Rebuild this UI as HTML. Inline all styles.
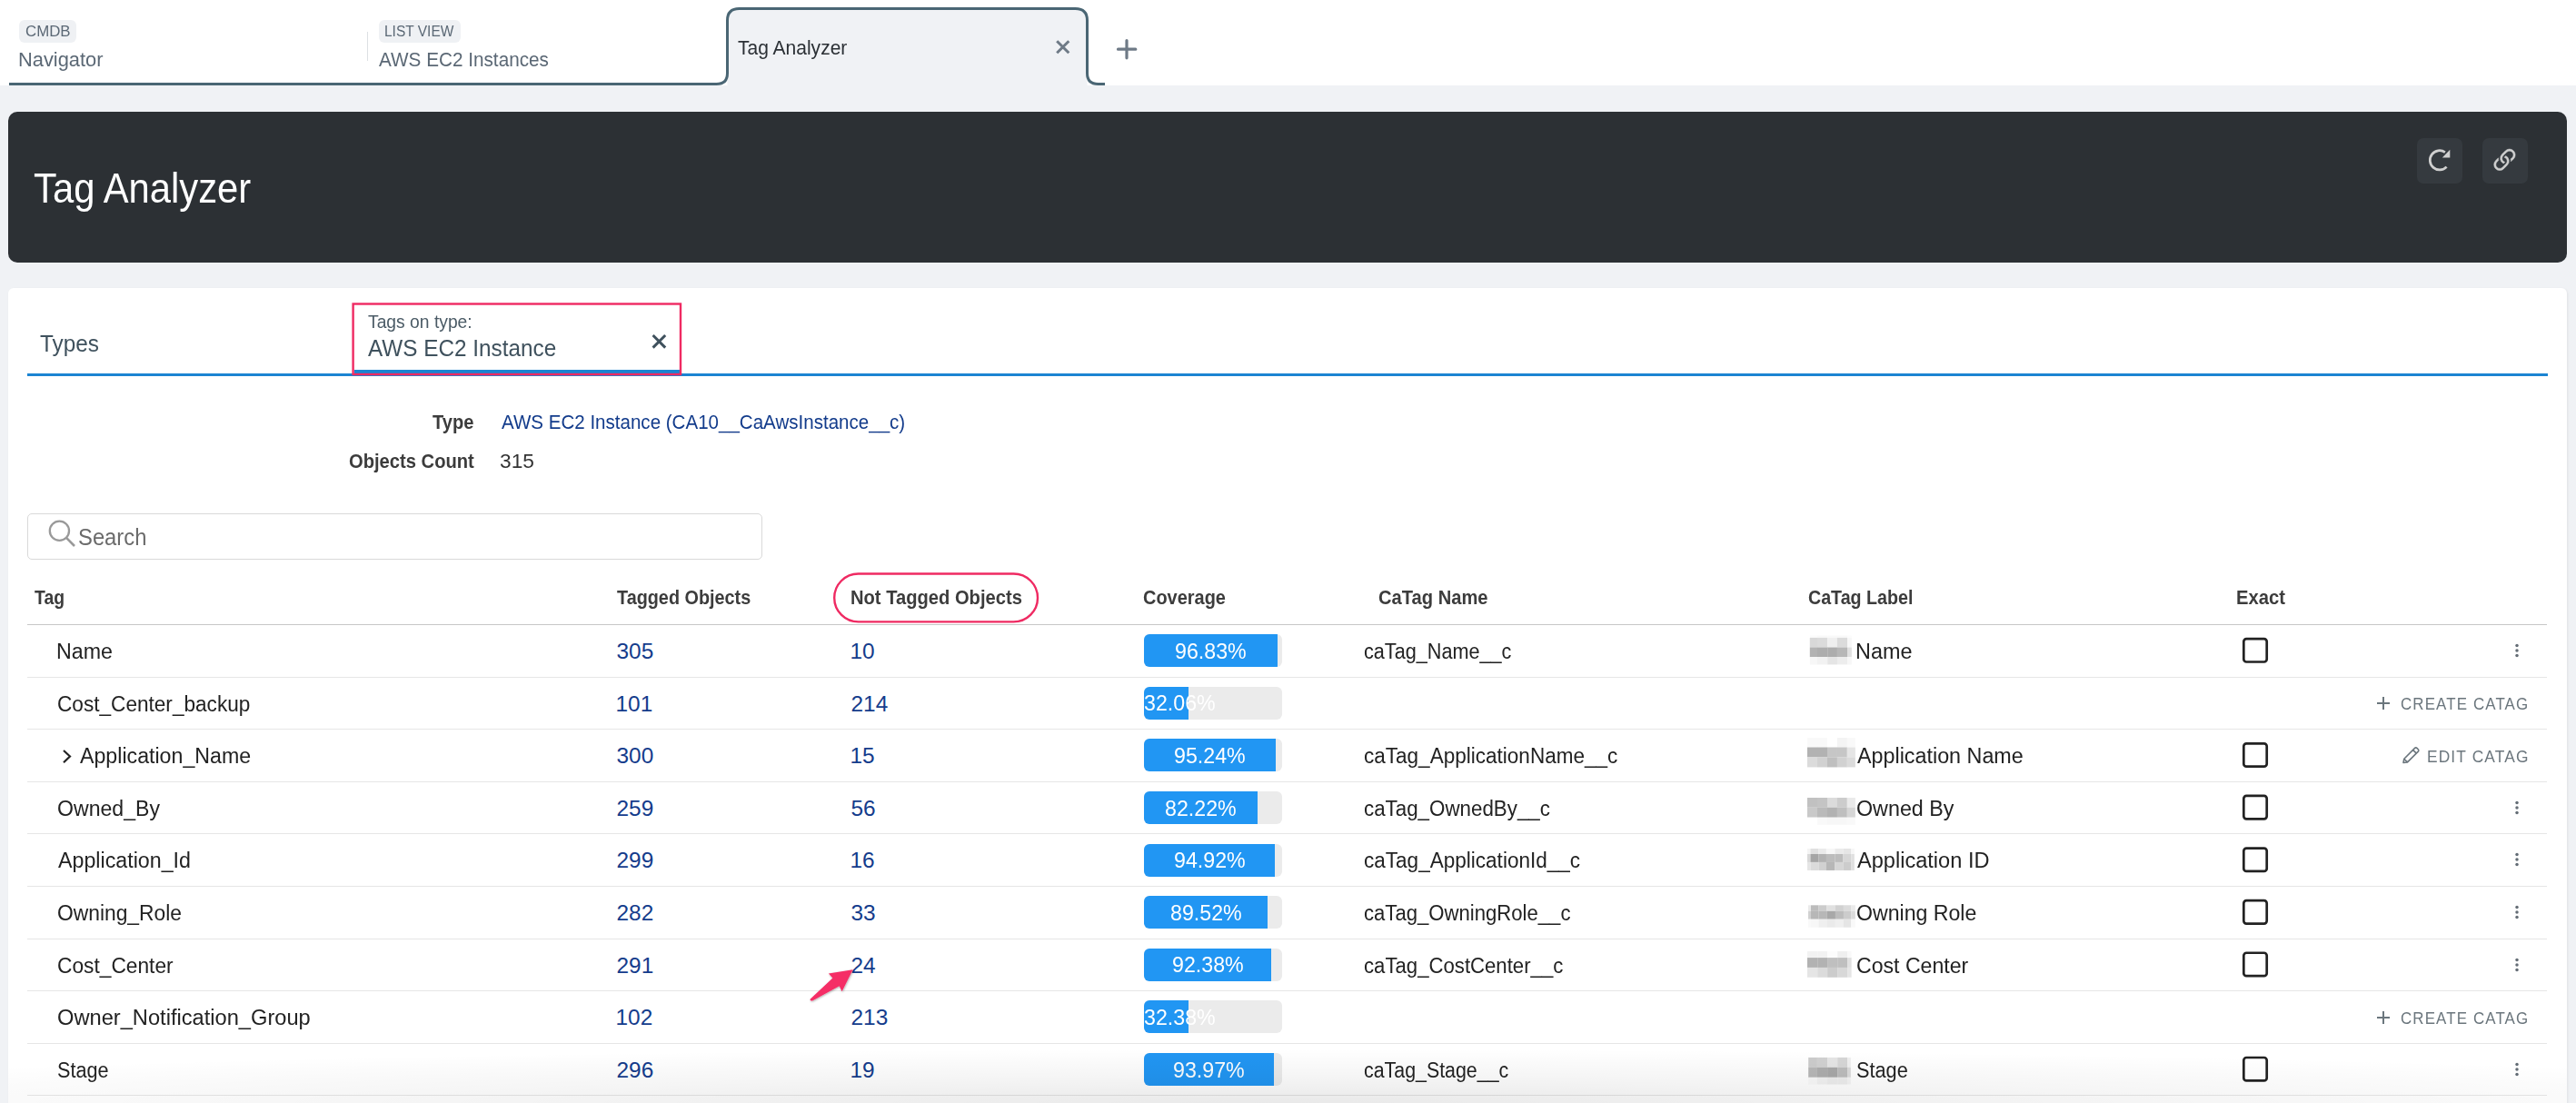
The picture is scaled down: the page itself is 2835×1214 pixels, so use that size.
<!DOCTYPE html>
<html><head><meta charset="utf-8"><title>Tag Analyzer</title>
<style>
html,body{margin:0;padding:0;}
body{width:2835px;height:1214px;overflow:hidden;background:#f0f2f5;position:relative;font-family:'Liberation Sans', sans-serif;}
.t{position:absolute;white-space:nowrap;transform-origin:0 0;font-family:'Liberation Sans', sans-serif;}
.badge{position:absolute;background:#eff1f4;border-radius:6px;}
</style></head><body>
<div style="position:absolute;left:0;top:0;width:2835px;height:94px;background:#ffffff"></div>
<div class="badge" style="left:21px;top:22px;width:63px;height:25px"></div>
<div class="badge" style="left:417px;top:22px;width:90px;height:25px"></div>
<div style="position:absolute;left:404px;top:35px;width:1px;height:32px;background:#dde0e3"></div>
<svg style="position:absolute;left:0;top:0" width="1300" height="100" viewBox="0 0 1300 100">
<path d="M800.5 92.5 L800.5 22.5 Q800.5 9.5 813.5 9.5 L1183.5 9.5 Q1196.5 9.5 1196.5 22.5 L1196.5 94 L800.5 94 Z" fill="#f0f2f5"/>
<path d="M10 92.5 L788.5 92.5 Q800.5 92.5 800.5 80.5 L800.5 22.5 Q800.5 9.5 813.5 9.5 L1183.5 9.5 Q1196.5 9.5 1196.5 22.5 L1196.5 80.5 Q1196.5 92.5 1208.5 92.5 L1216 92.5" fill="none" stroke="#4a6674" stroke-width="3"/>
<path d="M1163.2 45.2 L1176.3 58.2 M1176.3 45.2 L1163.2 58.2" stroke="#6e7a86" stroke-width="3" stroke-linecap="butt"/>
<path d="M1240 44.5 L1240 63.8 M1230.5 54.2 L1249.8 54.2" stroke="#6e7a86" stroke-width="3.2" stroke-linecap="round"/>
</svg>
<div style="position:absolute;left:9px;top:123px;width:2816px;height:166px;background:#2c3034;border-radius:10px"></div>
<div style="position:absolute;left:2660px;top:152px;width:50px;height:50px;background:#353a3f;border-radius:7px"></div>
<div style="position:absolute;left:2732px;top:152px;width:50px;height:50px;background:#353a3f;border-radius:7px"></div>
<svg style="position:absolute;left:2660px;top:152px" width="50" height="50" viewBox="0 0 50 50">
<path d="M30.9 15.6 A10.6 10.6 0 1 0 32.6 31.6" fill="none" stroke="#d0d0d0" stroke-width="2.7"/>
<path d="M36.3 12.8 L36.3 21.4 L27.8 21.4 Z" fill="#d0d0d0"/>
</svg>
<svg style="position:absolute;left:2732px;top:152px" width="50" height="50" viewBox="0 0 50 50">
<g transform="translate(7.517 7.917) scale(2.116)" fill="#d0d0d0" stroke="#d0d0d0" stroke-width="0.25" stroke-linejoin="round">
<path d="M4.715 6.542 3.343 7.914a3 3 0 1 0 4.243 4.243l1.828-1.829A3 3 0 0 0 8.586 5.5L8 6.086a1 1 0 0 0-.154.199 2 2 0 0 1 .861 3.337L6.88 11.45a2 2 0 1 1-2.830-2.830l.793-.792a4 4 0 0 1-.128-1.287z"/>
<path d="M6.586 4.672A3 3 0 0 0 7.414 9.5l.775-.776a2 2 0 0 1-.896-3.346L9.12 3.55a2 2 0 1 1 2.830 2.830l-.793.792c.112.42.155.855.128 1.287l1.372-1.372a3 3 0 1 0-4.243-4.243z"/>
</g></svg>
<div style="position:absolute;left:9px;top:317px;width:2816px;height:960px;background:#ffffff;border-radius:6px;box-shadow:1px 1px 3px rgba(0,0,0,0.07)"></div>
<div style="position:absolute;left:30px;top:411px;width:2774px;height:3px;background:#1b84d2"></div>
<div style="position:absolute;left:390px;top:407px;width:358px;height:4.5px;background:#1b84d2"></div>
<svg style="position:absolute;left:380px;top:325px" width="380" height="100" viewBox="380 325 380 100"><rect x="388.6" y="334.5" width="360.4" height="77.5" fill="none" stroke="#ef2a62" stroke-width="2.4"/></svg>
<svg style="position:absolute;left:700px;top:355px" width="50" height="40" viewBox="0 0 50 40">
<path d="M18.6 14 L32.2 27.6 M32.2 14 L18.6 27.6" stroke="#3f515d" stroke-width="3"/>
</svg>
<div style="position:absolute;left:30px;top:565px;width:807px;height:49px;border:1px solid #d9d9d9;border-radius:5px;background:#fff"></div>
<svg style="position:absolute;left:40px;top:560px" width="60" height="50" viewBox="0 0 60 50">
<circle cx="25.4" cy="24.3" r="10.6" fill="none" stroke="#999" stroke-width="2.3"/>
<path d="M33.0 31.9 L42 41" stroke="#999" stroke-width="2.6"/>
</svg>
<div style="position:absolute;left:30px;top:687px;width:2773px;height:1px;background:#c6c6c6"></div>
<svg style="position:absolute;left:910px;top:620px" width="240" height="75" viewBox="910 620 240 75"><rect x="918.2" y="631.5" width="223.8" height="52.9" rx="26.45" fill="none" stroke="#ef2a62" stroke-width="2.4"/></svg>
<div style="position:absolute;left:30px;top:745px;width:2773px;height:1px;background:#e6e6e6"></div>
<div style="position:absolute;left:1258.8px;top:698.10px;width:152.2px;height:36px;background:#ebebeb;border-radius:6px;overflow:hidden"><div style="position:absolute;left:0;top:0;width:147.38px;height:36px;background:#2196f3"></div></div>
<svg style="position:absolute;left:1980px;top:696px" width="70" height="45" viewBox="1980 696 70 45"><rect x="1991.8" y="699.5" width="8.25" height="2.45" fill="rgb(252,252,252)"/><rect x="2000.0" y="699.5" width="11.25" height="2.45" fill="rgb(249,249,249)"/><rect x="2011.2" y="699.5" width="10.75" height="2.45" fill="rgb(249,249,249)"/><rect x="2021.9" y="699.5" width="11.15" height="2.45" fill="rgb(249,249,249)"/><rect x="2033.0" y="699.5" width="4.85" height="2.45" fill="rgb(252,252,252)"/><rect x="1991.8" y="701.9" width="8.25" height="10.65" fill="rgb(216,216,216)"/><rect x="2000.0" y="701.9" width="11.25" height="10.65" fill="rgb(219,219,219)"/><rect x="2011.2" y="701.9" width="10.75" height="10.65" fill="rgb(239,239,239)"/><rect x="2021.9" y="701.9" width="11.15" height="10.65" fill="rgb(219,219,219)"/><rect x="2033.0" y="701.9" width="4.85" height="10.65" fill="rgb(247,247,247)"/><rect x="1991.8" y="712.5" width="8.25" height="10.65" fill="rgb(178,178,178)"/><rect x="2000.0" y="712.5" width="11.25" height="10.65" fill="rgb(173,173,173)"/><rect x="2011.2" y="712.5" width="10.75" height="10.65" fill="rgb(173,173,173)"/><rect x="2021.9" y="712.5" width="11.15" height="10.65" fill="rgb(183,183,183)"/><rect x="2033.0" y="712.5" width="4.85" height="10.65" fill="rgb(224,224,224)"/><rect x="1991.8" y="723.1" width="8.25" height="8.35" fill="rgb(247,247,247)"/><rect x="2000.0" y="723.1" width="11.25" height="8.35" fill="rgb(242,242,242)"/><rect x="2011.2" y="723.1" width="10.75" height="8.35" fill="rgb(229,229,229)"/><rect x="2021.9" y="723.1" width="11.15" height="8.35" fill="rgb(237,237,237)"/><rect x="2033.0" y="723.1" width="4.85" height="8.35" fill="rgb(247,247,247)"/></svg>
<svg style="position:absolute;left:2460px;top:693px" width="45" height="45" viewBox="2460 693 45 45"><rect x="2469.3" y="703.10" width="25.4" height="25.4" rx="3" fill="none" stroke="#222" stroke-width="2.7"/></svg>
<svg style="position:absolute;left:2760px;top:700.00px" width="20" height="32" viewBox="0 0 20 32"><circle cx="10" cy="10.6" r="1.75" fill="#646d75"/><circle cx="10" cy="16" r="1.75" fill="#646d75"/><circle cx="10" cy="21.5" r="1.75" fill="#646d75"/></svg>
<div style="position:absolute;left:30px;top:802px;width:2773px;height:1px;background:#e6e6e6"></div>
<div style="position:absolute;left:1258.8px;top:755.71px;width:152.2px;height:36px;background:#ebebeb;border-radius:6px;overflow:hidden"><div style="position:absolute;left:0;top:0;width:48.80px;height:36px;background:#2196f3"></div></div>
<svg style="position:absolute;left:2610px;top:764.20px" width="26" height="22" viewBox="0 0 26 22"><path d="M13 3 L13 17 M6 10 L20 10" stroke="#6b767d" stroke-width="2"/></svg>
<div style="position:absolute;left:30px;top:860px;width:2773px;height:1px;background:#e6e6e6"></div>
<div style="position:absolute;left:1258.8px;top:813.32px;width:152.2px;height:36px;background:#ebebeb;border-radius:6px;overflow:hidden"><div style="position:absolute;left:0;top:0;width:144.96px;height:36px;background:#2196f3"></div></div>
<svg style="position:absolute;left:1980px;top:808px" width="70" height="45" viewBox="1980 808 70 45"><rect x="1989.0" y="812.0" width="11.05" height="10.55" fill="rgb(249,249,249)"/><rect x="2000.0" y="812.0" width="11.05" height="10.55" fill="rgb(249,249,249)"/><rect x="2011.0" y="812.0" width="10.95" height="10.55" fill="rgb(255,255,255)"/><rect x="2021.9" y="812.0" width="10.95" height="10.55" fill="rgb(244,244,244)"/><rect x="2032.8" y="812.0" width="9.05" height="10.55" fill="rgb(249,249,249)"/><rect x="1989.0" y="822.5" width="11.05" height="10.95" fill="rgb(178,178,178)"/><rect x="2000.0" y="822.5" width="11.05" height="10.95" fill="rgb(178,178,178)"/><rect x="2011.0" y="822.5" width="10.95" height="10.95" fill="rgb(198,198,198)"/><rect x="2021.9" y="822.5" width="10.95" height="10.95" fill="rgb(198,198,198)"/><rect x="2032.8" y="822.5" width="9.05" height="10.95" fill="rgb(229,229,229)"/><rect x="1989.0" y="833.4" width="11.05" height="11.05" fill="rgb(219,219,219)"/><rect x="2000.0" y="833.4" width="11.05" height="11.05" fill="rgb(209,209,209)"/><rect x="2011.0" y="833.4" width="10.95" height="11.05" fill="rgb(191,191,191)"/><rect x="2021.9" y="833.4" width="10.95" height="11.05" fill="rgb(209,209,209)"/><rect x="2032.8" y="833.4" width="9.05" height="11.05" fill="rgb(219,219,219)"/></svg>
<svg style="position:absolute;left:2460px;top:809px" width="45" height="45" viewBox="2460 809 45 45"><rect x="2469.3" y="818.32" width="25.4" height="25.4" rx="3" fill="none" stroke="#222" stroke-width="2.7"/></svg>
<svg style="position:absolute;left:2640px;top:820.00px" width="26" height="24" viewBox="0 0 26 24">
<path d="M5 19.5 L5.8 15.2 L17.6 3.4 A1.6 1.6 0 0 1 19.9 3.4 L21.3 4.8 A1.6 1.6 0 0 1 21.3 7.1 L9.5 18.9 Z M15.6 5.4 L19.3 9.1 M5.8 15.2 L9.5 18.9" fill="none" stroke="#6b767d" stroke-width="1.6" stroke-linejoin="round"/>
</svg>
<svg style="position:absolute;left:66px;top:823.20px" width="16" height="20" viewBox="0 0 16 20"><path d="M4 3 L11 9.5 L4 16.2" fill="none" stroke="#222" stroke-width="2.2"/></svg>
<div style="position:absolute;left:30px;top:917px;width:2773px;height:1px;background:#e6e6e6"></div>
<div style="position:absolute;left:1258.8px;top:870.93px;width:152.2px;height:36px;background:#ebebeb;border-radius:6px;overflow:hidden"><div style="position:absolute;left:0;top:0;width:125.14px;height:36px;background:#2196f3"></div></div>
<svg style="position:absolute;left:1980px;top:874px" width="70" height="45" viewBox="1980 874 70 45"><rect x="1989.0" y="878.0" width="11.05" height="10.75" fill="rgb(193,193,193)"/><rect x="2000.0" y="878.0" width="11.05" height="10.75" fill="rgb(196,196,196)"/><rect x="2011.0" y="878.0" width="10.95" height="10.75" fill="rgb(219,219,219)"/><rect x="2021.9" y="878.0" width="10.95" height="10.75" fill="rgb(204,204,204)"/><rect x="2032.8" y="878.0" width="9.05" height="10.75" fill="rgb(234,234,234)"/><rect x="1989.0" y="888.7" width="11.05" height="11.05" fill="rgb(201,201,201)"/><rect x="2000.0" y="888.7" width="11.05" height="11.05" fill="rgb(186,186,186)"/><rect x="2011.0" y="888.7" width="10.95" height="11.05" fill="rgb(178,178,178)"/><rect x="2021.9" y="888.7" width="10.95" height="11.05" fill="rgb(191,191,191)"/><rect x="2032.8" y="888.7" width="9.05" height="11.05" fill="rgb(214,214,214)"/><rect x="1989.0" y="899.7" width="11.05" height="8.05" fill="rgb(255,255,255)"/><rect x="2000.0" y="899.7" width="11.05" height="8.05" fill="rgb(249,249,249)"/><rect x="2011.0" y="899.7" width="10.95" height="8.05" fill="rgb(247,247,247)"/><rect x="2021.9" y="899.7" width="10.95" height="8.05" fill="rgb(247,247,247)"/><rect x="2032.8" y="899.7" width="9.05" height="8.05" fill="rgb(249,249,249)"/></svg>
<svg style="position:absolute;left:2460px;top:866px" width="45" height="45" viewBox="2460 866 45 45"><rect x="2469.3" y="875.93" width="25.4" height="25.4" rx="3" fill="none" stroke="#222" stroke-width="2.7"/></svg>
<svg style="position:absolute;left:2760px;top:872.83px" width="20" height="32" viewBox="0 0 20 32"><circle cx="10" cy="10.6" r="1.75" fill="#646d75"/><circle cx="10" cy="16" r="1.75" fill="#646d75"/><circle cx="10" cy="21.5" r="1.75" fill="#646d75"/></svg>
<div style="position:absolute;left:30px;top:975px;width:2773px;height:1px;background:#e6e6e6"></div>
<div style="position:absolute;left:1258.8px;top:928.54px;width:152.2px;height:36px;background:#ebebeb;border-radius:6px;overflow:hidden"><div style="position:absolute;left:0;top:0;width:144.47px;height:36px;background:#2196f3"></div></div>
<svg style="position:absolute;left:1980px;top:930px" width="70" height="45" viewBox="1980 930 70 45"><rect x="1989.0" y="934.0" width="3.55" height="6.05" fill="rgb(244,244,244)"/><rect x="1992.5" y="934.0" width="8.95" height="6.05" fill="rgb(224,224,224)"/><rect x="2001.4" y="934.0" width="8.55" height="6.05" fill="rgb(234,234,234)"/><rect x="2009.9" y="934.0" width="9.55" height="6.05" fill="rgb(247,247,247)"/><rect x="2019.4" y="934.0" width="9.05" height="6.05" fill="rgb(234,234,234)"/><rect x="2028.4" y="934.0" width="8.95" height="6.05" fill="rgb(229,229,229)"/><rect x="2037.3" y="934.0" width="3.55" height="6.05" fill="rgb(247,247,247)"/><rect x="1989.0" y="940.0" width="3.55" height="8.95" fill="rgb(216,216,216)"/><rect x="1992.5" y="940.0" width="8.95" height="8.95" fill="rgb(165,165,165)"/><rect x="2001.4" y="940.0" width="8.55" height="8.95" fill="rgb(178,178,178)"/><rect x="2009.9" y="940.0" width="9.55" height="8.95" fill="rgb(188,188,188)"/><rect x="2019.4" y="940.0" width="9.05" height="8.95" fill="rgb(188,188,188)"/><rect x="2028.4" y="940.0" width="8.95" height="8.95" fill="rgb(214,214,214)"/><rect x="2037.3" y="940.0" width="3.55" height="8.95" fill="rgb(224,224,224)"/><rect x="1989.0" y="948.9" width="3.55" height="9.05" fill="rgb(229,229,229)"/><rect x="1992.5" y="948.9" width="8.95" height="9.05" fill="rgb(219,219,219)"/><rect x="2001.4" y="948.9" width="8.55" height="9.05" fill="rgb(209,209,209)"/><rect x="2009.9" y="948.9" width="9.55" height="9.05" fill="rgb(183,183,183)"/><rect x="2019.4" y="948.9" width="9.05" height="9.05" fill="rgb(214,214,214)"/><rect x="2028.4" y="948.9" width="8.95" height="9.05" fill="rgb(204,204,204)"/><rect x="2037.3" y="948.9" width="3.55" height="9.05" fill="rgb(224,224,224)"/></svg>
<svg style="position:absolute;left:2460px;top:924px" width="45" height="45" viewBox="2460 924 45 45"><rect x="2469.3" y="933.54" width="25.4" height="25.4" rx="3" fill="none" stroke="#222" stroke-width="2.7"/></svg>
<svg style="position:absolute;left:2760px;top:930.44px" width="20" height="32" viewBox="0 0 20 32"><circle cx="10" cy="10.6" r="1.75" fill="#646d75"/><circle cx="10" cy="16" r="1.75" fill="#646d75"/><circle cx="10" cy="21.5" r="1.75" fill="#646d75"/></svg>
<div style="position:absolute;left:30px;top:1033px;width:2773px;height:1px;background:#e6e6e6"></div>
<div style="position:absolute;left:1258.8px;top:986.15px;width:152.2px;height:36px;background:#ebebeb;border-radius:6px;overflow:hidden"><div style="position:absolute;left:0;top:0;width:136.25px;height:36px;background:#2196f3"></div></div>
<svg style="position:absolute;left:1980px;top:992px" width="70" height="45" viewBox="1980 992 70 45"><rect x="1990.0" y="996.3" width="3.05" height="6.55" fill="rgb(234,234,234)"/><rect x="1993.0" y="996.3" width="8.45" height="6.55" fill="rgb(188,188,188)"/><rect x="2001.4" y="996.3" width="9.05" height="6.55" fill="rgb(204,204,204)"/><rect x="2010.4" y="996.3" width="9.55" height="6.55" fill="rgb(224,224,224)"/><rect x="2019.9" y="996.3" width="9.05" height="6.55" fill="rgb(209,209,209)"/><rect x="2028.9" y="996.3" width="8.45" height="6.55" fill="rgb(219,219,219)"/><rect x="2037.3" y="996.3" width="4.55" height="6.55" fill="rgb(234,234,234)"/><rect x="1990.0" y="1002.8" width="3.05" height="8.95" fill="rgb(209,209,209)"/><rect x="1993.0" y="1002.8" width="8.45" height="8.95" fill="rgb(183,183,183)"/><rect x="2001.4" y="1002.8" width="9.05" height="8.95" fill="rgb(183,183,183)"/><rect x="2010.4" y="1002.8" width="9.55" height="8.95" fill="rgb(168,168,168)"/><rect x="2019.9" y="1002.8" width="9.05" height="8.95" fill="rgb(188,188,188)"/><rect x="2028.9" y="1002.8" width="8.45" height="8.95" fill="rgb(204,204,204)"/><rect x="2037.3" y="1002.8" width="4.55" height="8.95" fill="rgb(219,219,219)"/><rect x="1990.0" y="1011.7" width="3.05" height="9.05" fill="rgb(249,249,249)"/><rect x="1993.0" y="1011.7" width="8.45" height="9.05" fill="rgb(247,247,247)"/><rect x="2001.4" y="1011.7" width="9.05" height="9.05" fill="rgb(239,239,239)"/><rect x="2010.4" y="1011.7" width="9.55" height="9.05" fill="rgb(234,234,234)"/><rect x="2019.9" y="1011.7" width="9.05" height="9.05" fill="rgb(239,239,239)"/><rect x="2028.9" y="1011.7" width="8.45" height="9.05" fill="rgb(229,229,229)"/><rect x="2037.3" y="1011.7" width="4.55" height="9.05" fill="rgb(249,249,249)"/></svg>
<svg style="position:absolute;left:2460px;top:981px" width="45" height="45" viewBox="2460 981 45 45"><rect x="2469.3" y="991.15" width="25.4" height="25.4" rx="3" fill="none" stroke="#222" stroke-width="2.7"/></svg>
<svg style="position:absolute;left:2760px;top:988.05px" width="20" height="32" viewBox="0 0 20 32"><circle cx="10" cy="10.6" r="1.75" fill="#646d75"/><circle cx="10" cy="16" r="1.75" fill="#646d75"/><circle cx="10" cy="21.5" r="1.75" fill="#646d75"/></svg>
<div style="position:absolute;left:30px;top:1090px;width:2773px;height:1px;background:#e6e6e6"></div>
<div style="position:absolute;left:1258.8px;top:1043.76px;width:152.2px;height:36px;background:#ebebeb;border-radius:6px;overflow:hidden"><div style="position:absolute;left:0;top:0;width:140.60px;height:36px;background:#2196f3"></div></div>
<svg style="position:absolute;left:1980px;top:1043px" width="70" height="45" viewBox="1980 1043 70 45"><rect x="1989.0" y="1047.0" width="11.25" height="7.15" fill="rgb(242,242,242)"/><rect x="2000.2" y="1047.0" width="10.95" height="7.15" fill="rgb(242,242,242)"/><rect x="2011.1" y="1047.0" width="11.15" height="7.15" fill="rgb(252,252,252)"/><rect x="2022.2" y="1047.0" width="10.95" height="7.15" fill="rgb(239,239,239)"/><rect x="2033.1" y="1047.0" width="4.55" height="7.15" fill="rgb(249,249,249)"/><rect x="1989.0" y="1054.1" width="11.25" height="10.85" fill="rgb(178,178,178)"/><rect x="2000.2" y="1054.1" width="10.95" height="10.85" fill="rgb(178,178,178)"/><rect x="2011.1" y="1054.1" width="11.15" height="10.85" fill="rgb(191,191,191)"/><rect x="2022.2" y="1054.1" width="10.95" height="10.85" fill="rgb(191,191,191)"/><rect x="2033.1" y="1054.1" width="4.55" height="10.85" fill="rgb(224,224,224)"/><rect x="1989.0" y="1064.9" width="11.25" height="10.85" fill="rgb(229,229,229)"/><rect x="2000.2" y="1064.9" width="10.95" height="10.85" fill="rgb(219,219,219)"/><rect x="2011.1" y="1064.9" width="11.15" height="10.85" fill="rgb(204,204,204)"/><rect x="2022.2" y="1064.9" width="10.95" height="10.85" fill="rgb(216,216,216)"/><rect x="2033.1" y="1064.9" width="4.55" height="10.85" fill="rgb(229,229,229)"/></svg>
<svg style="position:absolute;left:2460px;top:1039px" width="45" height="45" viewBox="2460 1039 45 45"><rect x="2469.3" y="1048.76" width="25.4" height="25.4" rx="3" fill="none" stroke="#222" stroke-width="2.7"/></svg>
<svg style="position:absolute;left:2760px;top:1045.66px" width="20" height="32" viewBox="0 0 20 32"><circle cx="10" cy="10.6" r="1.75" fill="#646d75"/><circle cx="10" cy="16" r="1.75" fill="#646d75"/><circle cx="10" cy="21.5" r="1.75" fill="#646d75"/></svg>
<div style="position:absolute;left:30px;top:1148px;width:2773px;height:1px;background:#e6e6e6"></div>
<div style="position:absolute;left:1258.8px;top:1101.37px;width:152.2px;height:36px;background:#ebebeb;border-radius:6px;overflow:hidden"><div style="position:absolute;left:0;top:0;width:49.28px;height:36px;background:#2196f3"></div></div>
<svg style="position:absolute;left:2610px;top:1109.86px" width="26" height="22" viewBox="0 0 26 22"><path d="M13 3 L13 17 M6 10 L20 10" stroke="#6b767d" stroke-width="2"/></svg>
<div style="position:absolute;left:30px;top:1205px;width:2773px;height:1px;background:#e6e6e6"></div>
<div style="position:absolute;left:1258.8px;top:1158.98px;width:152.2px;height:36px;background:#ebebeb;border-radius:6px;overflow:hidden"><div style="position:absolute;left:0;top:0;width:143.02px;height:36px;background:#2196f3"></div></div>
<svg style="position:absolute;left:1980px;top:1160px" width="70" height="45" viewBox="1980 1160 70 45"><rect x="1990.2" y="1163.9" width="9.75" height="10.95" fill="rgb(204,204,204)"/><rect x="1999.9" y="1163.9" width="11.25" height="10.95" fill="rgb(209,209,209)"/><rect x="2011.1" y="1163.9" width="11.15" height="10.95" fill="rgb(229,229,229)"/><rect x="2022.2" y="1163.9" width="10.95" height="10.95" fill="rgb(214,214,214)"/><rect x="2033.1" y="1163.9" width="3.75" height="10.95" fill="rgb(239,239,239)"/><rect x="1990.2" y="1174.8" width="9.75" height="11.05" fill="rgb(183,183,183)"/><rect x="1999.9" y="1174.8" width="11.25" height="11.05" fill="rgb(173,173,173)"/><rect x="2011.1" y="1174.8" width="11.15" height="11.05" fill="rgb(168,168,168)"/><rect x="2022.2" y="1174.8" width="10.95" height="11.05" fill="rgb(188,188,188)"/><rect x="2033.1" y="1174.8" width="3.75" height="11.05" fill="rgb(219,219,219)"/><rect x="1990.2" y="1185.8" width="9.75" height="7.75" fill="rgb(249,249,249)"/><rect x="1999.9" y="1185.8" width="11.25" height="7.75" fill="rgb(242,242,242)"/><rect x="2011.1" y="1185.8" width="11.15" height="7.75" fill="rgb(237,237,237)"/><rect x="2022.2" y="1185.8" width="10.95" height="7.75" fill="rgb(237,237,237)"/><rect x="2033.1" y="1185.8" width="3.75" height="7.75" fill="rgb(244,244,244)"/></svg>
<svg style="position:absolute;left:2460px;top:1154px" width="45" height="45" viewBox="2460 1154 45 45"><rect x="2469.3" y="1163.98" width="25.4" height="25.4" rx="3" fill="none" stroke="#222" stroke-width="2.7"/></svg>
<svg style="position:absolute;left:2760px;top:1160.88px" width="20" height="32" viewBox="0 0 20 32"><circle cx="10" cy="10.6" r="1.75" fill="#646d75"/><circle cx="10" cy="16" r="1.75" fill="#646d75"/><circle cx="10" cy="21.5" r="1.75" fill="#646d75"/></svg>
<div class="t" style="left:27.59px;top:26.90px;font-size:16.71px;line-height:16.71px;color:#5b6875;transform:scaleX(1.0085);">CMDB</div>
<div class="t" style="left:20.02px;top:55.00px;font-size:22.1px;line-height:22.1px;color:#5b6875;transform:scaleX(0.9891);">Navigator</div>
<div class="t" style="left:423.47px;top:26.90px;font-size:16.71px;line-height:16.71px;color:#5b6875;transform:scaleX(0.9284);">LIST VIEW</div>
<div class="t" style="left:417.00px;top:54.90px;font-size:22.1px;line-height:22.1px;color:#5b6875;transform:scaleX(0.9377);">AWS EC2 Instances</div>
<div class="t" style="left:812.05px;top:41.80px;font-size:22.1px;line-height:22.1px;color:#2b3035;transform:scaleX(0.9512);">Tag Analyzer</div>
<div class="t" style="left:37.10px;top:183.90px;font-size:46.57px;line-height:46.57px;color:#ffffff;transform:scaleX(0.8974);">Tag Analyzer</div>
<div class="t" style="left:43.88px;top:364.50px;font-size:26.36px;line-height:26.36px;color:#3f515d;transform:scaleX(0.9232);">Types</div>
<div class="t" style="left:405.00px;top:344.60px;font-size:19.71px;line-height:19.71px;color:#4b5b66;transform:scaleX(0.9793);">Tags on type:</div>
<div class="t" style="left:405.00px;top:370.00px;font-size:26.36px;line-height:26.36px;color:#3f515d;transform:scaleX(0.9223);">AWS EC2 Instance</div>
<div class="t" style="left:476.40px;top:454.80px;font-size:21.36px;line-height:21.36px;color:#3c3c3c;font-weight:700;transform:scaleX(0.9417);">Type</div>
<div class="t" style="left:383.76px;top:497.60px;font-size:21.36px;line-height:21.36px;color:#3c3c3c;font-weight:700;transform:scaleX(0.9441);">Objects Count</div>
<div class="t" style="left:551.50px;top:454.80px;font-size:21.36px;line-height:21.36px;color:#123b8b;transform:scaleX(0.9618);">AWS EC2 Instance (CA10__CaAwsInstance__c)</div>
<div class="t" style="left:550.44px;top:497.60px;font-size:21.36px;line-height:21.36px;color:#333333;transform:scaleX(1.0647);">315</div>
<div class="t" style="left:86.46px;top:578.90px;font-size:25.86px;line-height:25.86px;color:#6b6b6b;transform:scaleX(0.9205);">Search</div>
<div class="t" style="left:38.30px;top:647.00px;font-size:22.57px;line-height:22.57px;color:#3c3c3c;font-weight:700;transform:scaleX(0.8595);">Tag</div>
<div class="t" style="left:678.90px;top:647.00px;font-size:22.57px;line-height:22.57px;color:#3c3c3c;font-weight:700;transform:scaleX(0.8784);">Tagged Objects</div>
<div class="t" style="left:935.51px;top:647.00px;font-size:22.57px;line-height:22.57px;color:#3c3c3c;font-weight:700;transform:scaleX(0.8933);">Not Tagged Objects</div>
<div class="t" style="left:1258.42px;top:647.00px;font-size:22.57px;line-height:22.57px;color:#3c3c3c;font-weight:700;transform:scaleX(0.8842);">Coverage</div>
<div class="t" style="left:1516.61px;top:647.00px;font-size:22.57px;line-height:22.57px;color:#3c3c3c;font-weight:700;transform:scaleX(0.8925);">CaTag Name</div>
<div class="t" style="left:1989.73px;top:647.00px;font-size:22.57px;line-height:22.57px;color:#3c3c3c;font-weight:700;transform:scaleX(0.8708);">CaTag Label</div>
<div class="t" style="left:2460.81px;top:647.00px;font-size:22.57px;line-height:22.57px;color:#3c3c3c;font-weight:700;transform:scaleX(0.8948);">Exact</div>
<div class="t" style="left:61.90px;top:704.90px;font-size:24.43px;line-height:24.43px;color:#222222;transform:scaleX(0.9516);">Name</div>
<div class="t" style="left:678.50px;top:704.90px;font-size:24.43px;line-height:24.43px;color:#143c8c;">305</div>
<div class="t" style="left:935.50px;top:704.90px;font-size:24.43px;line-height:24.43px;color:#143c8c;">10</div>
<div class="t" style="left:1501.11px;top:704.90px;font-size:24.43px;line-height:24.43px;color:#222222;transform:scaleX(0.8863);">caTag_Name__c</div>
<div class="t" style="left:2042.18px;top:704.90px;font-size:24.43px;line-height:24.43px;color:#222222;transform:scaleX(0.9581);">Name</div>
<div class="t" style="left:62.87px;top:762.51px;font-size:24.43px;line-height:24.43px;color:#222222;transform:scaleX(0.9256);">Cost_Center_backup</div>
<div class="t" style="left:677.50px;top:762.51px;font-size:24.43px;line-height:24.43px;color:#143c8c;">101</div>
<div class="t" style="left:936.50px;top:762.51px;font-size:24.43px;line-height:24.43px;color:#143c8c;">214</div>
<div class="t" style="left:2641.97px;top:765.90px;font-size:18.28px;line-height:18.28px;color:#6b767d;letter-spacing:1.2px;transform:scaleX(0.9268);">CREATE CATAG</div>
<div class="t" style="left:88.20px;top:820.12px;font-size:24.43px;line-height:24.43px;color:#222222;transform:scaleX(0.9492);">Application_Name</div>
<div class="t" style="left:678.50px;top:820.12px;font-size:24.43px;line-height:24.43px;color:#143c8c;">300</div>
<div class="t" style="left:935.50px;top:820.12px;font-size:24.43px;line-height:24.43px;color:#143c8c;">15</div>
<div class="t" style="left:1501.08px;top:820.12px;font-size:24.43px;line-height:24.43px;color:#222222;transform:scaleX(0.9226);">caTag_ApplicationName__c</div>
<div class="t" style="left:2044.10px;top:820.12px;font-size:24.43px;line-height:24.43px;color:#222222;transform:scaleX(0.9547);">Application Name</div>
<div class="t" style="left:2670.90px;top:824.00px;font-size:18.28px;line-height:18.28px;color:#6b767d;letter-spacing:1.2px;transform:scaleX(0.9491);">EDIT CATAG</div>
<div class="t" style="left:62.85px;top:877.73px;font-size:24.43px;line-height:24.43px;color:#222222;transform:scaleX(0.9458);">Owned_By</div>
<div class="t" style="left:678.50px;top:877.73px;font-size:24.43px;line-height:24.43px;color:#143c8c;">259</div>
<div class="t" style="left:936.50px;top:877.73px;font-size:24.43px;line-height:24.43px;color:#143c8c;">56</div>
<div class="t" style="left:1501.09px;top:877.73px;font-size:24.43px;line-height:24.43px;color:#222222;transform:scaleX(0.9149);">caTag_OwnedBy__c</div>
<div class="t" style="left:2043.15px;top:877.73px;font-size:24.43px;line-height:24.43px;color:#222222;transform:scaleX(0.9536);">Owned By</div>
<div class="t" style="left:63.80px;top:935.34px;font-size:24.43px;line-height:24.43px;color:#222222;transform:scaleX(0.9513);">Application_Id</div>
<div class="t" style="left:678.50px;top:935.34px;font-size:24.43px;line-height:24.43px;color:#143c8c;">299</div>
<div class="t" style="left:935.50px;top:935.34px;font-size:24.43px;line-height:24.43px;color:#143c8c;">16</div>
<div class="t" style="left:1501.08px;top:935.34px;font-size:24.43px;line-height:24.43px;color:#222222;transform:scaleX(0.9230);">caTag_ApplicationId__c</div>
<div class="t" style="left:2044.10px;top:935.34px;font-size:24.43px;line-height:24.43px;color:#222222;transform:scaleX(0.9653);">Application ID</div>
<div class="t" style="left:62.87px;top:992.95px;font-size:24.43px;line-height:24.43px;color:#222222;transform:scaleX(0.9338);">Owning_Role</div>
<div class="t" style="left:678.50px;top:992.95px;font-size:24.43px;line-height:24.43px;color:#143c8c;">282</div>
<div class="t" style="left:936.50px;top:992.95px;font-size:24.43px;line-height:24.43px;color:#143c8c;">33</div>
<div class="t" style="left:1501.09px;top:992.95px;font-size:24.43px;line-height:24.43px;color:#222222;transform:scaleX(0.9056);">caTag_OwningRole__c</div>
<div class="t" style="left:2043.15px;top:992.95px;font-size:24.43px;line-height:24.43px;color:#222222;transform:scaleX(0.9464);">Owning Role</div>
<div class="t" style="left:62.87px;top:1050.56px;font-size:24.43px;line-height:24.43px;color:#222222;transform:scaleX(0.9309);">Cost_Center</div>
<div class="t" style="left:678.50px;top:1050.56px;font-size:24.43px;line-height:24.43px;color:#143c8c;">291</div>
<div class="t" style="left:936.50px;top:1050.56px;font-size:24.43px;line-height:24.43px;color:#143c8c;">24</div>
<div class="t" style="left:1501.09px;top:1050.56px;font-size:24.43px;line-height:24.43px;color:#222222;transform:scaleX(0.9075);">caTag_CostCenter__c</div>
<div class="t" style="left:2043.15px;top:1050.56px;font-size:24.43px;line-height:24.43px;color:#222222;transform:scaleX(0.9457);">Cost Center</div>
<div class="t" style="left:62.83px;top:1108.17px;font-size:24.43px;line-height:24.43px;color:#222222;transform:scaleX(0.9685);">Owner_Notification_Group</div>
<div class="t" style="left:677.50px;top:1108.17px;font-size:24.43px;line-height:24.43px;color:#143c8c;">102</div>
<div class="t" style="left:936.50px;top:1108.17px;font-size:24.43px;line-height:24.43px;color:#143c8c;">213</div>
<div class="t" style="left:2641.97px;top:1111.56px;font-size:18.28px;line-height:18.28px;color:#6b767d;letter-spacing:1.2px;transform:scaleX(0.9268);">CREATE CATAG</div>
<div class="t" style="left:62.91px;top:1165.78px;font-size:24.43px;line-height:24.43px;color:#222222;transform:scaleX(0.8855);">Stage</div>
<div class="t" style="left:678.50px;top:1165.78px;font-size:24.43px;line-height:24.43px;color:#143c8c;">296</div>
<div class="t" style="left:935.50px;top:1165.78px;font-size:24.43px;line-height:24.43px;color:#143c8c;">19</div>
<div class="t" style="left:1501.12px;top:1165.78px;font-size:24.43px;line-height:24.43px;color:#222222;transform:scaleX(0.8750);">caTag_Stage__c</div>
<div class="t" style="left:2043.21px;top:1165.78px;font-size:24.43px;line-height:24.43px;color:#222222;transform:scaleX(0.8887);">Stage</div>
<div class="t" style="left:1293.14px;top:705.70px;font-size:23.29px;line-height:23.29px;color:#ffffff;transform:scaleX(0.9961);">96.83%</div>
<div class="t" style="left:1259.00px;top:763.31px;font-size:23.29px;line-height:23.29px;color:#ffffff;transform:scaleX(0.9961);">32.06%</div>
<div class="t" style="left:1291.93px;top:820.92px;font-size:23.29px;line-height:23.29px;color:#ffffff;transform:scaleX(0.9961);">95.24%</div>
<div class="t" style="left:1282.02px;top:878.53px;font-size:23.29px;line-height:23.29px;color:#ffffff;transform:scaleX(0.9961);">82.22%</div>
<div class="t" style="left:1291.69px;top:936.14px;font-size:23.29px;line-height:23.29px;color:#ffffff;transform:scaleX(0.9961);">94.92%</div>
<div class="t" style="left:1287.58px;top:993.75px;font-size:23.29px;line-height:23.29px;color:#ffffff;transform:scaleX(0.9961);">89.52%</div>
<div class="t" style="left:1289.76px;top:1051.36px;font-size:23.29px;line-height:23.29px;color:#ffffff;transform:scaleX(0.9961);">92.38%</div>
<div class="t" style="left:1259.00px;top:1108.97px;font-size:23.29px;line-height:23.29px;color:#ffffff;transform:scaleX(0.9961);">32.38%</div>
<div class="t" style="left:1290.97px;top:1166.58px;font-size:23.29px;line-height:23.29px;color:#ffffff;transform:scaleX(0.9961);">93.97%</div>
<svg style="position:absolute;left:880px;top:1060px" width="70" height="50" viewBox="880 1060 70 50">
<defs><filter id="sh" x="-20%" y="-20%" width="140%" height="140%"><feDropShadow dx="0.6" dy="0.8" stdDeviation="0.8" flood-color="#000" flood-opacity="0.35"/></filter></defs>
<path d="M938.6 1067.2 L926.6 1091.3 L923.7 1085.2 L894.0 1101.4 Q891.3 1102.2 891.6 1099.8 L916.4 1076.4 L911.9 1071.5 Z" fill="#f52d66" filter="url(#sh)"/>
</svg>
<div style="position:absolute;left:9px;top:1150px;width:2816px;height:64px;background:radial-gradient(ellipse 1900px 60px at 50% 100%, rgba(0,0,0,0.085) 0%, rgba(0,0,0,0.04) 50%, rgba(0,0,0,0) 100%);pointer-events:none"></div>
</body></html>
